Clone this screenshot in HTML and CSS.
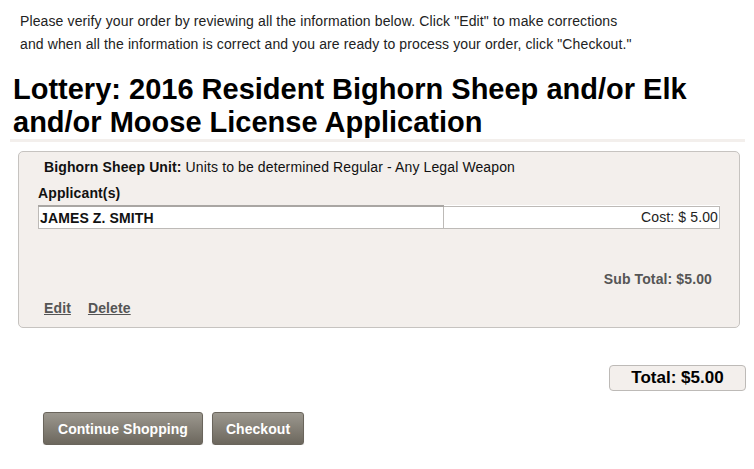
FILE: index.html
```html
<!DOCTYPE html>
<html>
<head>
  <title>Review Your Order</title>
  <meta charset="UTF-8" />
  <link rel="stylesheet" href="styles.css">
</head>
<body>
  <p class="intro">Please verify your order by reviewing all the information below. Click "Edit" to make corrections<br>
  and when all the information is correct and you are ready to process your order, click "Checkout."</p>

  <h1>Lottery: 2016 Resident Bighorn Sheep and/or Elk and/or Moose License Application</h1>

  <!-- Cart item -->
  <div class="item-panel">
    <div class="unit"><strong>Bighorn Sheep Unit:</strong> Units to be determined Regular - Any Legal Weapon</div>
    <div class="label">Applicant(s)</div>
    <table class="applicants">
      <tr>
        <td class="name">JAMES Z. SMITH</td>
        <td class="cost">Cost: $ 5.00</td>
      </tr>
    </table>
    <div class="subtotal">Sub Total: $5.00</div>
    <div class="actions">
      <a href="#">Edit</a>
      <a href="#">Delete</a>
    </div>
  </div>

  <div class="total-row">
    <div class="total-box">Total: $5.00</div>
  </div>

  <div class="buttons">
    <button type="button">Continue Shopping</button>
    <button type="button" class="checkout">Checkout</button>
  </div>
</body>
</html>
```

FILE: styles.css
```css
body {
  font-family: "Liberation Sans", Arial, sans-serif;
  font-size: 14px;
  letter-spacing: 0.12px;
  color: #111;
  margin: 0;
  background: #fff;
}
.intro {
  margin: 10px 0 0 20px;
  line-height: 23px;
  color: #222;
}
h1 {
  font-size: 29px;
  line-height: 33px;
  letter-spacing: 0;
  margin: 17px 9px 0 10px;
  padding-left: 3px;
  border-bottom: 3px solid #f3efec;
  color: #000;
}
.item-panel {
  margin: 9px 14px 0 18px;
  background: #f3efec;
  border: 1px solid #c6c3c0;
  border-radius: 5px;
  padding: 5px 19px 10px 19px;
}
.unit { line-height: 20px; padding-left: 6px; }
.label { font-weight: bold; line-height: 20px; margin-top: 6px; }
.applicants {
  width: 100%;
  margin-top: 2px;
  border-collapse: collapse;
  background: #fff;
}
.applicants td {
  border: 1px solid #bdbab7;
  height: 21px;
  padding: 0 1px;
}
.applicants .name { font-weight: bold; width: 402px; border-top: 2px solid #a9a6a3; }
.applicants .cost { text-align: right; color: #222; }
.subtotal {
  text-align: right;
  font-weight: bold;
  color: #555;
  margin-top: 41px;
  padding-right: 8px;
  line-height: 18px;
}
.actions { margin-top: 11px; padding-left: 6px; line-height: 18px; }
.actions a {
  color: #555;
  font-weight: bold;
  margin-right: 13px;
}
.total-row {
  display: flex;
  justify-content: flex-end;
  margin: 37px 8px 0 0;
}
.total-box {
  background: #f3efec;
  border: 1px solid #bdbab7;
  border-radius: 4px;
  width: 135px;
  height: 24px;
  line-height: 24px;
  text-align: center;
  font-weight: bold;
  font-size: 17px;
  letter-spacing: 0;
  color: #000;
}
.buttons {
  display: flex;
  gap: 9px;
  margin: 21px 0 0 43px;
}
.buttons button {
  font-family: "Liberation Sans", Arial, sans-serif;
  font-size: 14px;
  font-weight: bold;
  letter-spacing: 0.05px;
  color: #fff;
  height: 33px;
  padding: 0 14px;
  border: 1px solid #6a655c;
  border-radius: 3px;
  background: linear-gradient(#9c988f, #6c675d);
  box-shadow: 0 1px 1px rgba(0,0,0,0.15);
}
.buttons .checkout { padding: 0 13px; }
```
